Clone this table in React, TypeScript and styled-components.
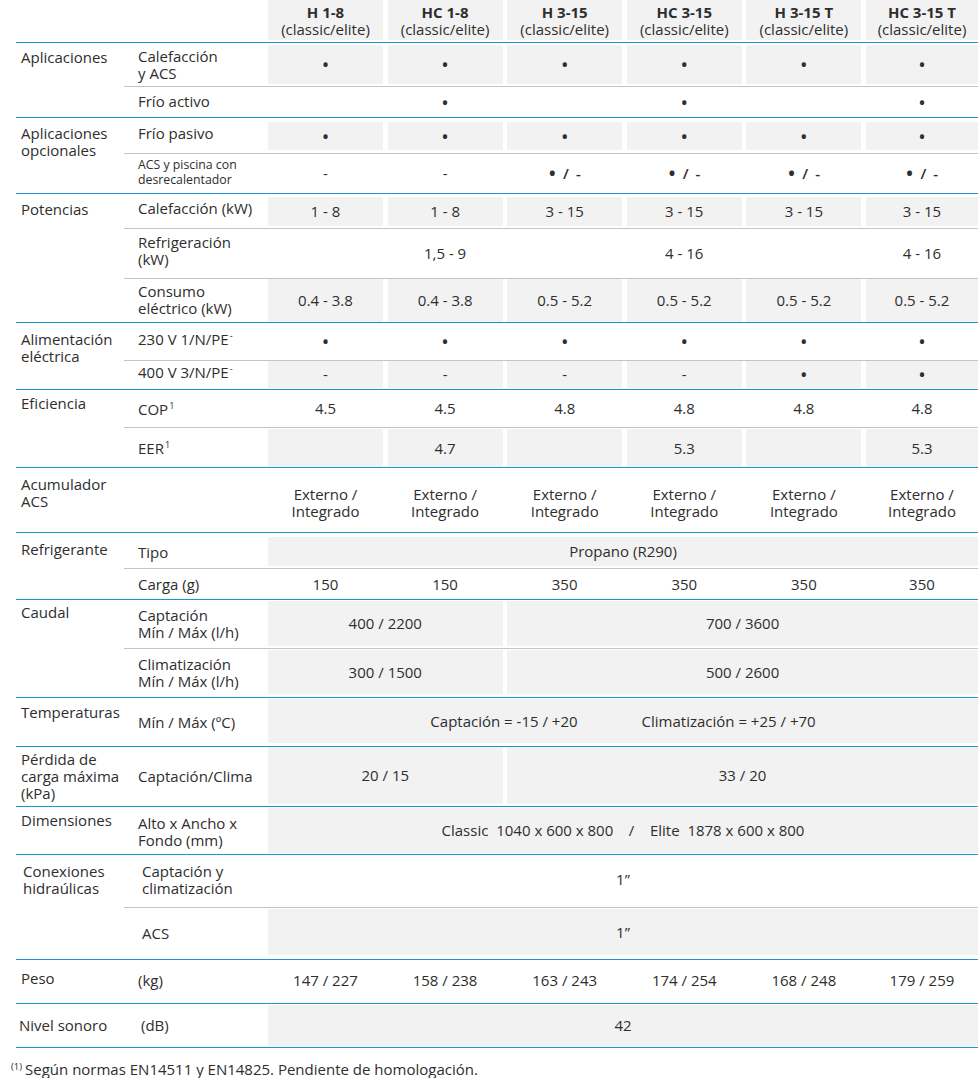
import React from "react";
import styled, { createGlobalStyle, css } from "styled-components";

const BLUE = "#1a96d2";
const RULE = "#c4c4c4";
const FILL = "#f2f2f2";
const INK = "#2e2e2e";

const GlobalStyle = createGlobalStyle`
  html, body { margin: 0; padding: 0; background: #ffffff; }
  body {
    font-family: "Open Sans", "Liberation Sans", sans-serif;
    font-size: 15px;
    line-height: 17px;
    color: ${INK};
  }
`;

const gridCols = css`
  display: grid;
  grid-template-columns: 139.4px repeat(5, 115px) 1fr;
  column-gap: 4.6px;
`;

const Table = styled.div`
  margin-left: 16px;
  width: 962px;
`;

const HeaderRow = styled.div`
  display: flex;
  height: 42px;
  border-bottom: 1px solid ${BLUE};
`;

const Spacer = styled.div`
  width: 108px;
  flex: none;
`;

const HeaderGrid = styled.div`
  ${gridCols};
  flex: 1;
`;

const HeaderCell = styled.div`
  background: ${FILL};
  margin-bottom: 2px;
  display: flex;
  flex-direction: column;
  align-items: center;
  justify-content: center;
  padding-top: 1px;
  white-space: nowrap;
`;

const ModelName = styled.span`
  font-weight: 700;
`;

const Group = styled.div`
  display: flex;
  border-bottom: 1px solid ${BLUE};
`;

const GroupLabel = styled.div<{ $pt: number; $px: number }>`
  width: 108px;
  flex: none;
  box-sizing: border-box;
  padding: ${(p) => p.$pt}px 0 0 ${(p) => p.$px}px;
`;

const SubRows = styled.div`
  flex: 1;
  display: flex;
  flex-direction: column;
`;

const SubRow = styled.div<{ $h: number }>`
  ${gridCols};
  box-sizing: content-box;
  height: ${(p) => p.$h}px;
  border-bottom: 1px solid ${RULE};
  &:last-child {
    border-bottom: none;
  }
`;

const SubLabel = styled.div<{ $small?: boolean; $off: number; $lx: number }>`
  display: flex;
  align-items: center;
  padding-left: ${(p) => p.$lx}px;
  padding-top: ${(p) => (p.$off > 0 ? p.$off * 2 : 0)}px;
  padding-bottom: ${(p) => (p.$off < 0 ? -p.$off * 2 : 0)}px;
  font-size: ${(p) => (p.$small ? "12.3px" : "15px")};
  line-height: ${(p) => (p.$small ? "15px" : "17px")};
  white-space: nowrap;
`;

const Cell = styled.div<{
  $span: number;
  $shade?: boolean;
  $it: number;
  $ib: number;
  $vo: number;
}>`
  grid-column: span ${(p) => p.$span};
  display: flex;
  align-items: center;
  justify-content: center;
  text-align: center;
  white-space: pre;
  background: ${(p) => (p.$shade ? FILL : "transparent")};
  margin: ${(p) => p.$it}px 0 ${(p) => p.$ib}px;
  padding-top: ${(p) => (p.$vo > 0 ? p.$vo * 2 : 0)}px;
  padding-bottom: ${(p) => (p.$vo < 0 ? -p.$vo * 2 : 0)}px;
`;

const Dot = styled.span`
  font-size: 20px;
  line-height: 17px;
`;

const Mark = styled.span`
  display: inline-flex;
  align-items: center;
  gap: 7px;
  font-weight: 600;
`;

const Pair = styled.span`
  display: flex;
  gap: 64px;
`;

const Sup = styled.span`
  font-size: 9px;
  line-height: 0;
  vertical-align: 6px;
  margin-left: 1px;
`;

const Footnote = styled.div`
  padding: 13px 0 0 11px;
  font-size: 15px;
  line-height: 17px;
  white-space: nowrap;
`;

const FootSup = styled.span`
  font-size: 9.5px;
  line-height: 0;
  vertical-align: 5px;
  margin-right: 3px;
`;

type CellDef = string | { t: React.ReactNode; span: number };

type RowDef = {
  label?: React.ReactNode;
  small?: boolean;
  h: number;
  shade?: boolean;
  inset?: [number, number];
  lo?: number;
  vo?: number;
  lx?: number;
  cells: CellDef[];
};

type GroupDef = {
  title: React.ReactNode;
  pt: number;
  px?: number;
  rows: RowDef[];
};

const one = (t: React.ReactNode): CellDef => ({ t, span: 1 });
const B: CellDef = one(<Dot>•</Dot>);
const E: CellDef = "";
const BD: CellDef = one(
  <Mark>
    <Dot>•</Dot>
    <span>/</span>
    <span>-</span>
  </Mark>
);
const all = (v: CellDef): CellDef[] => [v, v, v, v, v, v];
const full = (t: React.ReactNode): CellDef[] => [{ t, span: 6 }];
const split = (a: string, b: string): CellDef[] => [
  { t: a, span: 2 },
  { t: b, span: 4 },
];

const models = ["H 1-8", "HC 1-8", "H 3-15", "HC 3-15", "H 3-15 T", "HC 3-15 T"];

const groups: GroupDef[] = [
  {
    title: "Aplicaciones",
    pt: 5.5,
    rows: [
      { label: <>Calefacción<br />y ACS</>, h: 43, shade: true, inset: [2, 2], cells: all(B) },
      { label: "Frío activo", h: 30, lo: -1, cells: [E, B, E, B, E, B] },
    ],
  },
  {
    title: <>Aplicaciones<br />opcionales</>,
    pt: 6.5,
    rows: [
      { label: "Frío pasivo", h: 35, shade: true, inset: [4, 3], lo: -2, cells: all(B) },
      {
        label: <>ACS y piscina con<br />desrecalentador</>,
        small: true,
        h: 39,
        lo: -1.5,
        cells: ["-", "-", BD, BD, BD, BD],
      },
    ],
  },
  {
    title: "Potencias",
    pt: 6.5,
    rows: [
      {
        label: "Calefacción (kW)",
        h: 34,
        shade: true,
        inset: [3, 2],
        lo: -2.5,
        cells: ["1 - 8", "1 - 8", "3 - 15", "3 - 15", "3 - 15", "3 - 15"],
      },
      {
        label: <>Refrigeración<br />(kW)</>,
        h: 49,
        lo: -3,
        cells: [E, "1,5 - 9", E, "4 - 16", E, "4 - 16"],
      },
      {
        label: <>Consumo<br />eléctrico (kW)</>,
        h: 43,
        shade: true,
        inset: [0, 0],
        lo: -1,
        cells: ["0.4 - 3.8", "0.4 - 3.8", "0.5 - 5.2", "0.5 - 5.2", "0.5 - 5.2", "0.5 - 5.2"],
      },
    ],
  },
  {
    title: <>Alimentación<br />eléctrica</>,
    pt: 7.5,
    rows: [
      { label: <>230 V 1/N/PE<Sup>-</Sup></>, h: 37, lo: -2, cells: all(B) },
      {
        label: <>400 V 3/N/PE<Sup>-</Sup></>,
        h: 28,
        shade: true,
        inset: [0, 1],
        lo: -2.5,
        cells: ["-", "-", "-", "-", B, B],
      },
    ],
  },
  {
    title: "Eficiencia",
    pt: 4.5,
    rows: [
      { label: <>COP<Sup>1</Sup></>, h: 37, lo: 1, cells: ["4.5", "4.5", "4.8", "4.8", "4.8", "4.8"] },
      {
        label: <>EER<Sup>1</Sup></>,
        h: 39,
        shade: true,
        inset: [1, 0],
        lo: 1,
        cells: [E, "4.7", E, "5.3", E, "5.3"],
      },
    ],
  },
  {
    title: <>Acumulador<br />ACS</>,
    pt: 7.8,
    rows: [{ label: "", h: 64, vo: 3, cells: all("Externo /\nIntegrado") }],
  },
  {
    title: "Refrigerante",
    pt: 7.5,
    rows: [
      { label: "Tipo", h: 35, shade: true, inset: [4, 2], lo: 2, cells: full("Propano (R290)") },
      { label: "Carga (g)", h: 30, cells: ["150", "150", "350", "350", "350", "350"] },
    ],
  },
  {
    title: "Caudal",
    pt: 4,
    rows: [
      {
        label: <>Captación<br />Mín / Máx (l/h)</>,
        h: 48,
        shade: true,
        inset: [1, 2],
        cells: split("400 / 2200", "700 / 3600"),
      },
      {
        label: <>Climatización<br />Mín / Máx (l/h)</>,
        h: 48,
        shade: true,
        inset: [1, 3],
        cells: split("300 / 1500", "500 / 2600"),
      },
    ],
  },
  {
    title: "Temperaturas",
    pt: 5.5,
    rows: [
      {
        label: "Mín / Máx (ºC)",
        h: 48,
        shade: true,
        inset: [1, 3],
        cells: full(
          <Pair>
            <span>Captación = -15 / +20</span>
            <span>Climatización = +25 / +70</span>
          </Pair>
        ),
      },
    ],
  },
  {
    title: <>Pérdida de<br />carga máxima<br />(kPa)</>,
    pt: 3.5,
    rows: [
      {
        label: "Captación/Clima",
        h: 59,
        shade: true,
        inset: [0, 2],
        cells: split("20 / 15", "33 / 20"),
      },
    ],
  },
  {
    title: "Dimensiones",
    pt: 4.5,
    rows: [
      {
        label: <>Alto x Ancho x<br />Fondo (mm)</>,
        h: 47,
        shade: true,
        inset: [1, 1],
        lo: 1,
        cells: full("Classic  1040 x 600 x 800    /    Elite  1878 x 600 x 800"),
      },
    ],
  },
  {
    title: <>Conexiones<br />hidraúlicas</>,
    pt: 8.2,
    px: 7,
    rows: [
      { label: <>Captación y<br />climatización</>, lx: 18, h: 52, lo: -1, vo: -1.5, cells: full("1”") },
      { label: "ACS", lx: 18, h: 51, shade: true, inset: [1, 4], cells: full("1”") },
    ],
  },
  {
    title: "Peso",
    pt: 10.2,
    rows: [
      {
        label: "(kg)",
        h: 43,
        lo: -1.5,
        vo: -1.5,
        cells: ["147 / 227", "158 / 238", "163 / 243", "174 / 254", "168 / 248", "179 / 259"],
      },
    ],
  },
  {
    title: "Nivel sonoro",
    pt: 13.2,
    px: 3,
    rows: [{ label: "(dB)", lx: 17, h: 43, shade: true, inset: [1, 1], cells: full("42") }],
  },
];

export default function App() {
  return (
    <>
      <GlobalStyle />
      <Table>
        <HeaderRow>
          <Spacer />
          <HeaderGrid>
            <div />
            {models.map((m) => (
              <HeaderCell key={m}>
                <ModelName>{m}</ModelName>
                <span>(classic/elite)</span>
              </HeaderCell>
            ))}
          </HeaderGrid>
        </HeaderRow>
        {groups.map((g, gi) => (
          <Group key={gi}>
            <GroupLabel $pt={g.pt} $px={g.px ?? 5}>
              {g.title}
            </GroupLabel>
            <SubRows>
              {g.rows.map((r, ri) => {
                const [it, ib] = r.inset ?? [0, 0];
                return (
                  <SubRow key={ri} $h={r.h}>
                    <SubLabel $small={r.small} $off={r.lo ?? 0} $lx={r.lx ?? 14}>
                      <span>{r.label}</span>
                    </SubLabel>
                    {r.cells.map((c, ci) => {
                      const cell = typeof c === "string" ? { t: c, span: 1 } : c;
                      return (
                        <Cell
                          key={ci}
                          $span={cell.span}
                          $shade={r.shade}
                          $it={it}
                          $ib={ib}
                          $vo={r.vo ?? 0}
                        >
                          {cell.t}
                        </Cell>
                      );
                    })}
                  </SubRow>
                );
              })}
            </SubRows>
          </Group>
        ))}
      </Table>
      <Footnote>
        <FootSup>(1)</FootSup>Según normas EN14511 y EN14825. Pendiente de homologación.
      </Footnote>
    </>
  );
}
